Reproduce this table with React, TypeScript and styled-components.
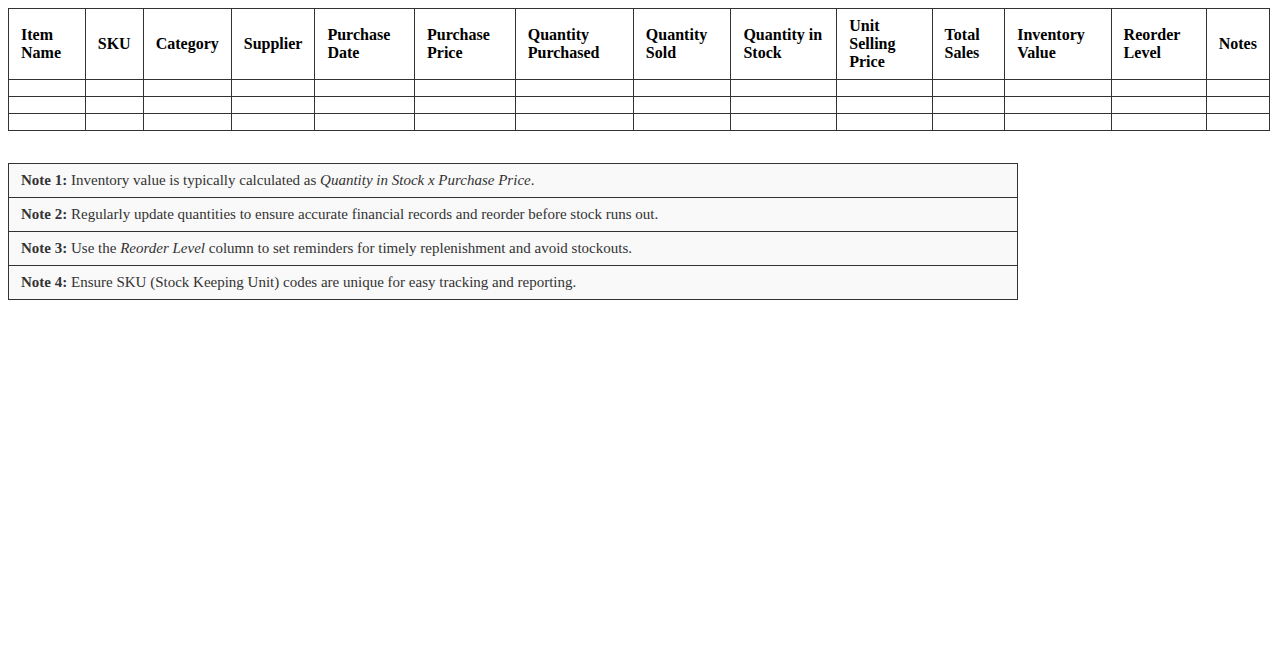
import React from 'react';
import styled, { createGlobalStyle } from 'styled-components';

const GlobalStyle = createGlobalStyle`
    body {
        margin: 8px;
        font-family: "Liberation Serif", "Times New Roman", serif;
        background: #fff;
        color: #000;
    }
`;

const columns = [
    'Item Name',
    'SKU',
    'Category',
    'Supplier',
    'Purchase Date',
    'Purchase Price',
    'Quantity Purchased',
    'Quantity Sold',
    'Quantity in Stock',
    'Unit Selling Price',
    'Total Sales',
    'Inventory Value',
    'Reorder Level',
    'Notes',
];

const rows = [0, 1, 2];

const App = () => {
    return (
        <>
            <GlobalStyle />
            <Table>
                <thead>
                    <tr>
                        {columns.map((c) => (
                            <HeadCell key={c}>{c}</HeadCell>
                        ))}
                    </tr>
                </thead>
                <tbody>
                    {rows.map((r) => (
                        <tr key={r}>
                            {columns.map((c) => (
                                <Cell key={c} />
                            ))}
                        </tr>
                    ))}
                </tbody>
            </Table>
            <NotesBox>
                <Note>
                    <b>Note 1:</b> Inventory value is typically calculated as{' '}
                    <i>Quantity in Stock x Purchase Price</i>.
                </Note>
                <Note>
                    <b>Note 2:</b> Regularly update quantities to ensure accurate financial
                    records and reorder before stock runs out.
                </Note>
                <Note>
                    <b>Note 3:</b> Use the <i>Reorder Level</i> column to set reminders for
                    timely replenishment and avoid stockouts.
                </Note>
                <Note>
                    <b>Note 4:</b> Ensure SKU (Stock Keeping Unit) codes are unique for easy
                    tracking and reporting.
                </Note>
            </NotesBox>
        </>
    );
};

export default App;

const Table = styled.table`
    width: 100%;
    border-collapse: collapse;
`;
const HeadCell = styled.th`
    border: 1px solid #333;
    padding: 8px 12px;
    text-align: left;
    font-size: 16px;
    font-weight: bold;
    line-height: 18px;
`;
const Cell = styled.td`
    border: 1px solid #333;
    padding: 8px 12px;
    height: 0;
`;
const NotesBox = styled.div`
    box-sizing: border-box;
    width: 80%;
    margin-top: 32px;
    border: 1px solid #333;
    background: #f9f9f9;
`;
const Note = styled.div`
    padding: 8px 12px;
    font-size: 15px;
    line-height: 17px;
    color: #333;
    & + & {
        border-top: 1px solid #333;
    }
`;
